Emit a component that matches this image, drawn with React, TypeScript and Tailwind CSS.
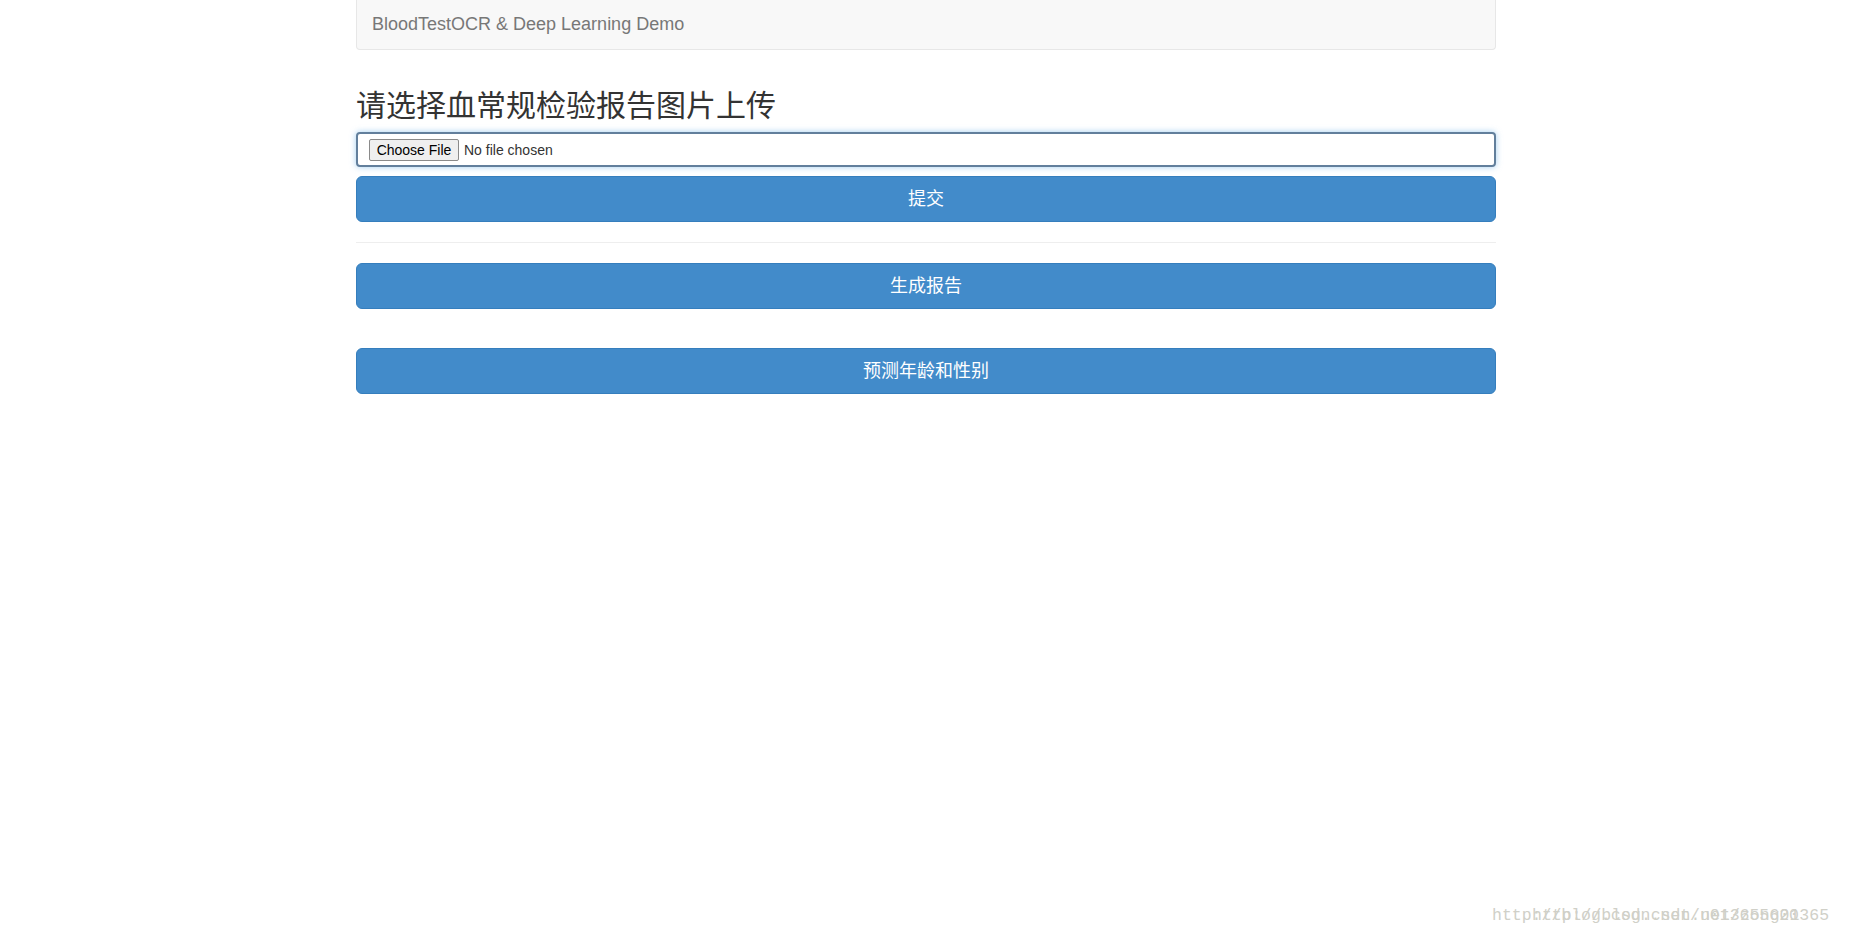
import React from "react";

const FONT = '"Liberation Sans", Arial, "Noto Sans CJK SC", sans-serif';

function PrimaryButton({ label }: { label: string }) {
  return (
    <button
      type="button"
      className="block h-[46px] w-full rounded-[6px] border border-[#357ebd] bg-[#428bca] px-4 text-[18px] leading-[24px] text-white"
    >
      {label}
    </button>
  );
}

export default function App() {
  return (
    <div className="relative min-h-[937px] overflow-hidden bg-white text-[#333]" style={{ fontFamily: FONT }}>
      <div className="mx-auto w-[1170px] px-[15px]">
        <div className="h-[50px] rounded-b-[4px] border border-t-0 border-[#e7e7e7] bg-[#f8f8f8] px-[15px] pt-[14px]">
          <span className="block text-[18px] leading-[20px] text-[#777]">BloodTestOCR &amp; Deep Learning Demo</span>
        </div>

        <h2 className="mt-[39px] mb-[10px] text-[30px] leading-[33px] font-normal text-[#333]">
          请选择血常规检验报告图片上传
        </h2>

        <div className="flex h-[35px] items-center rounded-[4px] border-2 border-[#627f9c] bg-white pl-[11px] pt-[1px] shadow-[0_0_6px_rgba(102,175,233,0.6)]">
          <span className="flex h-[22px] w-[90px] items-center justify-center rounded-[2px] border border-[#8a8a8a] bg-[#efefef] text-[14px] text-black">
            Choose File
          </span>
          <span className="ml-[5px] text-[14px] text-[#333]">No file chosen</span>
        </div>

        <div className="mt-[9px]">
          <PrimaryButton label="提交" />
        </div>

        <hr className="my-[20px] border-t border-[#eee]" />

        <PrimaryButton label="生成报告" />

        <div className="mt-[39px]">
          <PrimaryButton label="预测年龄和性别" />
        </div>
      </div>

      <div
        className="absolute left-[1492px] top-[906px] text-[16.5px] leading-[20px] text-[#d0d0c8]"
        style={{ fontFamily: '"Liberation Mono", "Courier New", monospace' }}
      >
        <span className="block whitespace-nowrap">http://blog.csdn.net/u013655620</span>
        <span className="absolute left-[40px] top-0 whitespace-nowrap">http://blog.csdn.net/zong01365</span>
      </div>
    </div>
  );
}
